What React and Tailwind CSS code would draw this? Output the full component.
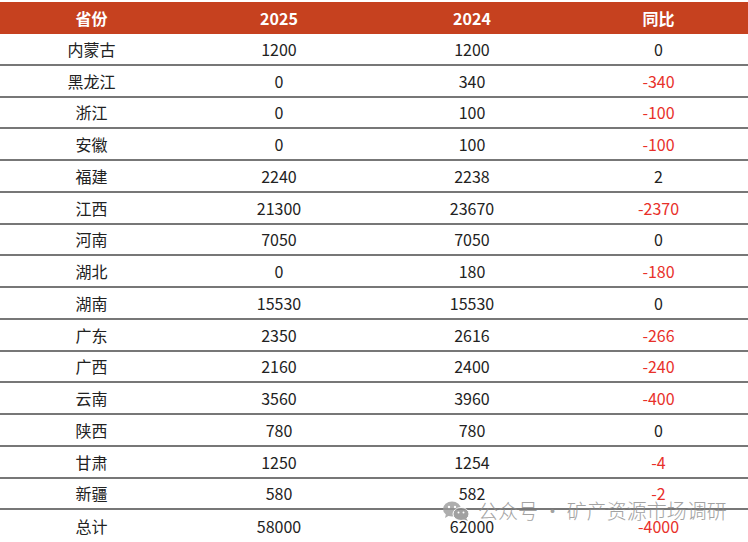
import React from "react";

const rows = [
  ["内蒙古", "1200", "1200", "0"],
  ["黑龙江", "0", "340", "-340"],
  ["浙江", "0", "100", "-100"],
  ["安徽", "0", "100", "-100"],
  ["福建", "2240", "2238", "2"],
  ["江西", "21300", "23670", "-2370"],
  ["河南", "7050", "7050", "0"],
  ["湖北", "0", "180", "-180"],
  ["湖南", "15530", "15530", "0"],
  ["广东", "2350", "2616", "-266"],
  ["广西", "2160", "2400", "-240"],
  ["云南", "3560", "3960", "-400"],
  ["陕西", "780", "780", "0"],
  ["甘肃", "1250", "1254", "-4"],
  ["新疆", "580", "582", "-2"],
  ["总计", "58000", "62000", "-4000"],
];

const cols = "grid grid-cols-[183px_192px_194px_179px]";

function WeChatIcon() {
  return (
    <svg width="28" height="22" viewBox="0 0 28 22">
      <ellipse cx="10" cy="9" rx="9" ry="7.5" fill="#9a9a9a" />
      <path d="M4 14 L3 18 L8 15 Z" fill="#9a9a9a" />
      <ellipse cx="19" cy="14" rx="8" ry="6.5" fill="#8a8a8a" stroke="#fff" strokeWidth="1" />
      <path d="M24 18 L26 21 L21 19 Z" fill="#8a8a8a" />
      <circle cx="7" cy="7" r="1.2" fill="#fff" />
      <circle cx="13" cy="7" r="1.2" fill="#fff" />
      <circle cx="16.5" cy="12.5" r="1" fill="#fff" />
      <circle cx="21.5" cy="12.5" r="1" fill="#fff" />
    </svg>
  );
}

export default function App() {
  return (
    <div
      className="relative w-[748px] h-[542px] overflow-hidden bg-white pt-[2px] text-[16px] text-[#222]"
      style={{ fontFamily: '"Noto Sans CJK SC", "Noto Sans", sans-serif' }}
    >
      {/* header */}
      <div className={`${cols} h-[32px] items-center bg-[#c6411f] text-white font-bold`}>
        <div className="text-center">省份</div>
        <div className="text-center">2025</div>
        <div className="text-center">2024</div>
        <div className="text-center">同比</div>
      </div>

      {rows.map((r, i) => (
        <div
          key={r[0]}
          className={`${cols} h-[31.75px] items-center ${
            i < rows.length - 1 ? "border-b-2 border-[#777]" : ""
          }`}
        >
          <div className="text-center">{r[0]}</div>
          <div className="text-center">{r[1]}</div>
          <div className="text-center">{r[2]}</div>
          <div className={`text-center ${r[3].startsWith("-") ? "text-[#e8302a]" : ""}`}>
            {r[3]}
          </div>
        </div>
      ))}

      {/* watermark */}
      <div className="absolute left-[442px] top-[500px] flex items-center gap-[8px] whitespace-nowrap text-[20px] font-light leading-none text-[#8c8c8c] opacity-80">
        <WeChatIcon />
        <span>公众号 · 矿产资源市场调研</span>
      </div>
    </div>
  );
}
